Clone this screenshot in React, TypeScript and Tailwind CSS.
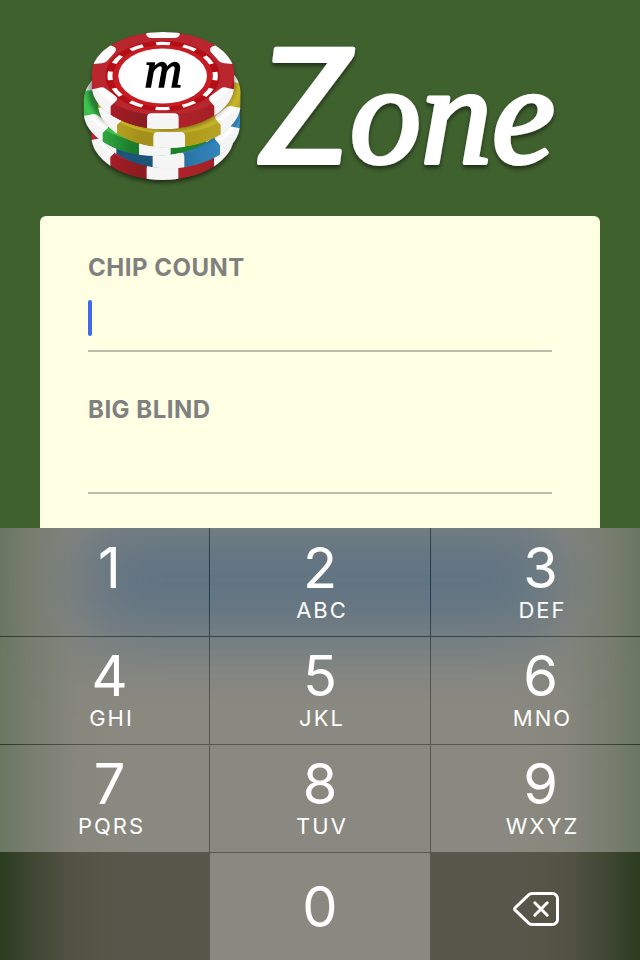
import React from "react";

type KeyProps = { digit: string; letters?: string; side?: boolean };

type ChipProps = { cx: number; cy: number; face: string; edge: string; shadow?: boolean };

const RX = 214;
const RY = 125;
const THICKNESS = 42;

/* One poker chip: a thick coloured disc with white blocks round the rim. */
function Chip({ cx, cy, face, edge, shadow = true }: ChipProps) {
  const id = "chip-" + cx + "-" + cy;
  const body = `M${-RX} 0A${RX} ${RY} 0 0 1 ${RX} 0V${THICKNESS - 8}A${RX} ${RY + 8} 0 0 1 ${-RX} ${THICKNESS - 8}Z`;
  return (
    <g transform={`translate(${cx} ${cy})`}>
      <clipPath id={id}>
        <path d={body} />
      </clipPath>
      <g clipPath={`url(#${id})`}>
        <path d={body} fill={`url(#${edge})`} />
        <ellipse cx="0" cy="0" rx={RX} ry={RY} fill={face} />
        <g fill="#fdfdfd">
          <path d="M-50 -140H50V-116Q46 -107 34 -107H-34Q-46 -107 -50 -116Z" />
          <path d="M-215 -28L-182 -95L-150 -82Q-137 -76 -143 -66L-163 -43Q-170 -33 -184 -31Z" />
          <path d="M215 -28L182 -95L150 -82Q137 -76 143 -66L163 -43Q170 -33 184 -31Z" />
          <path d="M-220 48L-194 43Q-182 38 -172 45L-143 66Q-133 74 -141 82L-157 98V150L-220 120Z" />
          <path d="M220 48L194 43Q182 38 172 45L143 66Q133 74 141 82L154 98V150L220 120Z" />
          <path d="M-48 175V132Q-48 119 -34 119H34Q47 119 47 132V175Z" />
        </g>
        <path
          d={`M${-RX} 0A${RX} ${RY} 0 0 0 ${RX} 0V${THICKNESS}A${RX} ${RY} 0 0 1 ${-RX} ${THICKNESS}Z`}
          fill="#000"
          opacity="0.03"
        />
        {shadow && (
          <ellipse cx="-2" cy="-32" rx="200" ry="146" fill="#000" opacity="0.38" filter="url(#soft)" />
        )}
      </g>
    </g>
  );
}

function Logo() {
  return (
    <svg viewBox="70 0 500 196" className="w-full max-w-[500px]" role="img" aria-label="m Zone">
      <defs>
        <filter id="soft" x="-20%" y="-20%" width="140%" height="140%">
          <feGaussianBlur stdDeviation="7" />
        </filter>
        <filter id="drop" x="-10%" y="-10%" width="120%" height="130%">
          <feDropShadow dx="0" dy="3" stdDeviation="2" floodColor="#000" floodOpacity="0.5" />
        </filter>
        <linearGradient id="redEdge">
          <stop offset="0" stopColor="#c0222c" />
          <stop offset="0.35" stopColor="#8f1c22" />
          <stop offset="0.6" stopColor="#b4252c" />
          <stop offset="1" stopColor="#a51f27" />
        </linearGradient>
        <linearGradient id="yellowEdge">
          <stop offset="0" stopColor="#c9b62c" />
          <stop offset="0.3" stopColor="#a8941c" />
          <stop offset="1" stopColor="#c2ae25" />
        </linearGradient>
        <linearGradient id="greenEdge">
          <stop offset="0" stopColor="#3fc851" />
          <stop offset="0.35" stopColor="#1d7f2b" />
          <stop offset="1" stopColor="#1c8f2d" />
        </linearGradient>
        <linearGradient id="blueEdge">
          <stop offset="0" stopColor="#265a80" />
          <stop offset="0.35" stopColor="#1f567c" />
          <stop offset="0.7" stopColor="#2f7fb4" />
          <stop offset="1" stopColor="#3d93cb" />
        </linearGradient>
      </defs>

      <g filter="url(#drop)">
        <g transform="translate(70 20) scale(0.3333)">
          <Chip cx={278} cy={313} face="#b8232b" edge="redEdge" />
          <Chip cx={296} cy={278} face="#2f80b6" edge="blueEdge" />
          <Chip cx={255} cy={241} face="#3cc44f" edge="greenEdge" />
          <Chip cx={298} cy={217} face="#c6b328" edge="yellowEdge" />
          <Chip cx={279} cy={161} face="#b9262f" edge="redEdge" shadow={false} />
          <g transform="translate(278 168) scale(1 0.62)">
            <circle r="158" fill="none" stroke="#b30f15" strokeWidth="26" />
            <circle r="141" fill="none" stroke="#c81b21" strokeWidth="16" />
            <circle
              r="158"
              fill="none"
              stroke="#fff"
              strokeWidth="15"
              strokeDasharray="42 40.73"
              strokeDashoffset="21"
            />
            <circle r="133" fill="#fff" />
          </g>
          <text
            x="280"
            y="202"
            textAnchor="middle"
            fontSize="158"
            stroke="#000"
            strokeWidth="4"
            className="font-['Liberation_Serif',serif] italic"
          >
            m
          </text>
        </g>
      </g>

      <text
        x="261"
        y="163"
        fontSize="142"
        fill="#fff"
        stroke="#fff"
        strokeWidth="4"
        strokeLinejoin="round"
        filter="url(#drop)"
        className="font-['Liberation_Serif',serif] italic"
      >
        <tspan fontSize="160" strokeWidth="4" className="font-['Lato',sans-serif]">
          Z
        </tspan>
        one
      </text>
    </svg>
  );
}

function Field({ id, label, active = false }: { id: string; label: string; active?: boolean }) {
  return (
    <div className="flex flex-col gap-3">
      <label htmlFor={id} className="text-2xl/6 font-bold tracking-[0.5px] text-[#808080]">
        {label}
      </label>
      <div className="relative">
        <input
          id={id}
          type="text"
          inputMode="numeric"
          className="block h-[60px] w-full border-b-2 border-[#bcbcab] bg-transparent text-3xl text-[#404040] caret-transparent outline-none"
        />
        {active && <span className="absolute top-2 left-0 h-9 w-1 rounded-xs bg-[#4169ee]" />}
      </div>
    </div>
  );
}

function Key({ digit, letters = "", side = false }: KeyProps) {
  return (
    <button
      type="button"
      className={`flex flex-col items-center justify-end gap-0.5 bg-white/30 pb-3.5 ${side ? "pl-2.5" : ""}`}
    >
      <span className="text-[56px]/[56px]">{digit}</span>
      <span className="h-6 pl-1 text-[22px]/6 tracking-[2px]">{letters}</span>
    </button>
  );
}

function Keypad() {
  return (
    <div className="relative overflow-hidden bg-[linear-gradient(to_right,#2b3c20_0px,#414835_36px,#535345_75px,#58574b_130px,#58574b_calc(100%-130px),#535345_calc(100%-75px),#414835_calc(100%-36px),#2b3c20_100%)]">
      <div className="absolute inset-x-[80px] -top-2 h-[120px] rounded-3xl bg-[#1c384e] blur-[34px]" />
      <div className="relative grid grid-cols-[209fr_220fr_209fr] grid-rows-[108px_repeat(3,107px)] gap-px font-['Inter',sans-serif] text-white">
        <Key digit="1" side />
        <Key digit="2" letters="ABC" />
        <Key digit="3" letters="DEF" side />
        <Key digit="4" letters="GHI" side />
        <Key digit="5" letters="JKL" />
        <Key digit="6" letters="MNO" side />
        <Key digit="7" letters="PQRS" side />
        <Key digit="8" letters="TUV" />
        <Key digit="9" letters="WXYZ" side />
        <div />
        <button type="button" className="flex items-center justify-center bg-white/30 text-[56px]/[56px]">
          0
        </button>
        <button type="button" aria-label="Delete" className="flex items-center justify-center pt-1">
          <svg
            viewBox="0 0 46 34"
            className="h-[34px] w-[46px]"
            fill="none"
            stroke="currentColor"
            strokeWidth="3"
            strokeLinecap="round"
            strokeLinejoin="round"
          >
            <path d="M19 1.5H39.5A5 5 0 0 1 44.5 6.5V27.5A5 5 0 0 1 39.5 32.5H19Q17 32.5 15.6 31.2L2.2 18.2Q1 17 2.2 15.8L15.6 2.8Q17 1.5 19 1.5Z" />
            <path d="M21.8 10.8L34.2 23.2M34.2 10.8L21.8 23.2" />
          </svg>
        </button>
      </div>
    </div>
  );
}

export default function App() {
  return (
    <div className="flex min-h-screen flex-col bg-[#3f612e] font-['Inter',sans-serif]">
      <header className="flex justify-center px-4 pb-5">
        <Logo />
      </header>
      <main className="mx-10 flex flex-1 flex-col gap-[46px] rounded-t-md bg-[#ffffe3] px-12 pt-10 pb-[34px]">
        <Field id="chip-count" label="CHIP COUNT" active />
        <Field id="big-blind" label="BIG BLIND" />
      </main>
      <Keypad />
    </div>
  );
}
